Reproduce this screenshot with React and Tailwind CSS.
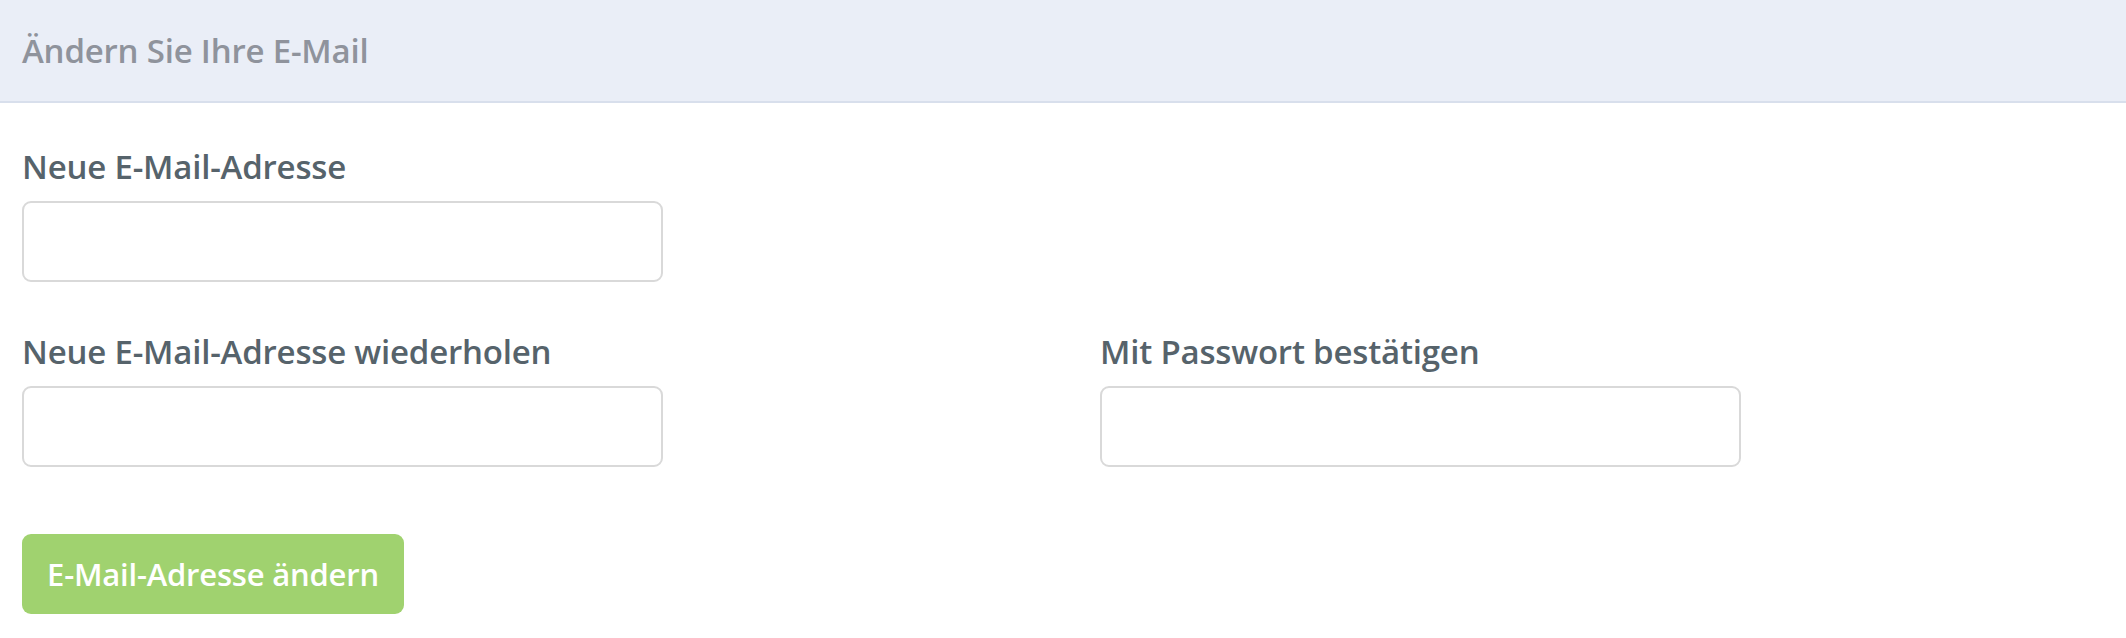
import React from "react";

function Field({ label, type = "text" }) {
  return (
    <div className="flex flex-col">
      <label className="text-[33px] leading-[36px] font-semibold tracking-[-0.2px] text-[#56636b]">{label}</label>
      <input
        type={type}
        className="mt-[16px] h-[81px] w-[641px] rounded-[9px] border-2 border-[#d9d9d9] bg-white px-4 outline-none"
      />
    </div>
  );
}

export default function App() {
  return (
    <div className="min-h-screen bg-white font-['Open_Sans','Liberation_Sans',sans-serif]">
      {/* Header */}
      <div className="flex h-[103px] items-center border-b-2 border-[#d8dfec] bg-[#eaeef7] px-[22px]">
        <h2 className="text-[33px] font-semibold tracking-[-0.2px] text-[#8f939c]">Ändern Sie Ihre E-Mail</h2>
      </div>

      <form className="px-[22px] pt-[46px]" onSubmit={(e) => e.preventDefault()}>
        <Field label="Neue E-Mail-Adresse" type="email" />

        <div className="mt-[52px] grid grid-cols-2 gap-x-[74px]">
          <Field label="Neue E-Mail-Adresse wiederholen" type="email" />
          <Field label="Mit Passwort bestätigen" type="password" />
        </div>

        <button
          type="submit"
          className="mt-[67px] h-[80px] w-[382px] rounded-[9px] bg-[#a0d26f] text-[31px] font-semibold tracking-[-0.2px] text-white"
        >
          E-Mail-Adresse ändern
        </button>
      </form>
    </div>
  );
}
